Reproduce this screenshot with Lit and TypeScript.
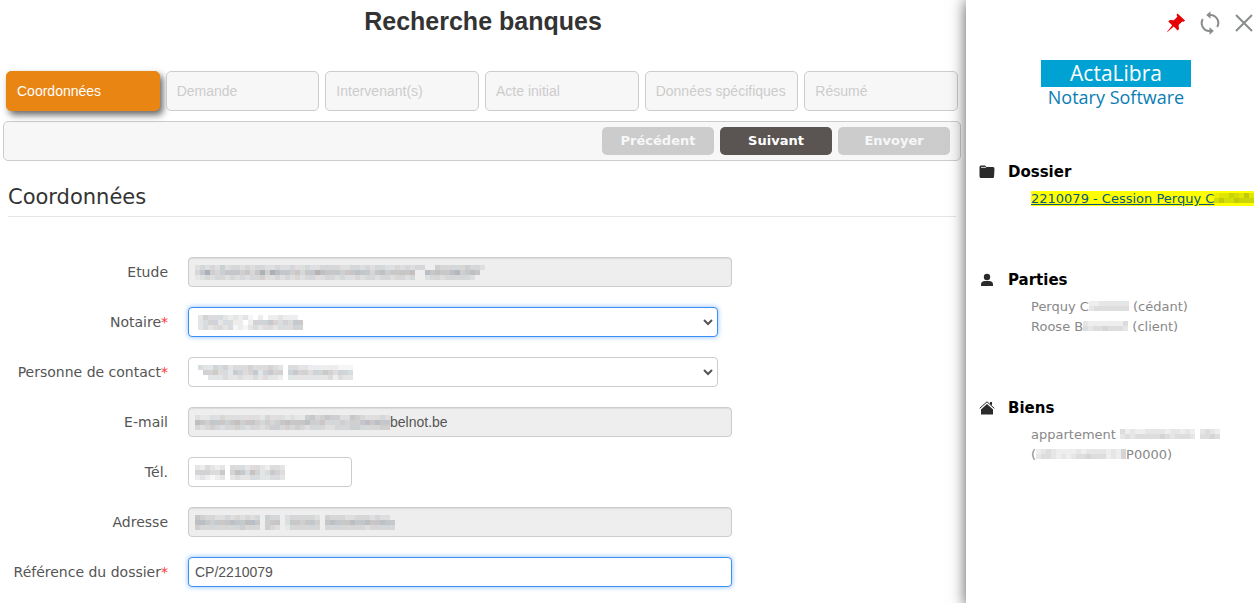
import { LitElement, html, svg, css } from "lit";
import { customElement, property } from "lit/decorators.js";

const TINTS = ["110,112,120", "95,115,135", "130,115,110", "115,115,115", "105,120,125"];

/* Masked personal data: each row is a string of grey levels, 0 (clear) to 9 (dark). */
@customElement("masked-text")
export class MaskedText extends LitElement {
  @property({ attribute: false }) rows: string[] = [];
  @property({ type: Number }) cell = 5;
  @property() tone = "";
  static styles = css`
    :host { display: inline-block; line-height: 0; }
    svg { display: block; }
  `;
  render() {
    const c = this.cell;
    const w = Math.max(...this.rows.map((r) => r.length)) * c;
    const h = this.rows.length * c;
    return html`<svg width=${w} height=${h} shape-rendering="crispEdges" aria-hidden="true">
      ${this.rows.map((row, y) =>
        [...row].map((d, x) => {
          const a = Number(d) / 16;
          const tone = this.tone || TINTS[(x * 3 + y * 2 + Number(d)) % TINTS.length];
          return svg`<rect x=${x * c} y=${y * c} width=${c} height=${c} fill=${`rgba(${tone},${a})`}></rect>`;
        })
      )}
    </svg>`;
  }
}

const STEPS = ["Coordonnées", "Demande", "Intervenant(s)", "Acte initial", "Données spécifiques", "Résumé"];

interface Field {
  id: string;
  label: string;
  kind: "input" | "select";
  mask?: string[];
  value?: string;
  required?: boolean;
  disabled?: boolean;
  active?: boolean;
  short?: boolean;
}

const FIELDS: Field[] = [
  { id: "etude", label: "Etude", kind: "input", disabled: true, mask: [
    "2323242332323322322322322333322332323322323233004333334332",
    "3584345554535848655453558655545565535645555600656556745650",
    "1232332323233422323232332233232232332332332300233233333200"] },
  { id: "notaire", label: "Notaire", kind: "select", required: true, active: true, mask: [
    "354443232310202232220", "345534422025556545466", "343443412134344344455"] },
  { id: "contact", label: "Personne de contact", kind: "select", required: true, mask: [
    "43354534445444543044332222221110", "05564436545635655056554556545540", "00333433433434332033333333424330"] },
  { id: "email", label: "E-mail", kind: "input", disabled: true, value: "belnot.be", mask: [
    "211223222222213222121145345442254322232", "654555456455434345655564453334344565655", "323432334323323443434323332233344333344"] },
  { id: "tel", label: "Tél.", kind: "input", short: true, mask: [
    "3243230444344324430", "5554460576475346540", "2321230343344334430"] },
  { id: "adresse", label: "Adresse", kind: "input", disabled: true, mask: [
    "5433223232323043302333332043332233323220", "6654555655665045502554554056555655655655", "4333333334333043201333333033333333233333"] },
  { id: "reference", label: "Référence du dossier", kind: "input", required: true, active: true, value: "CP/2210079" },
];

@customElement("app-root")
export class AppRoot extends LitElement {
  static styles = css`
    :host {
      display: grid;
      grid-template-columns: minmax(0, 1fr) 294px;
      min-height: 100vh;
      overflow: hidden;
      background: #fff;
      color: #555;
      font: 14px/20px Verdana, "DejaVu Sans", sans-serif;
    }
    * { box-sizing: border-box; }
    h1, h2, h3, ol, ul { margin: 0; padding: 0; list-style: none; }
    h1 {
      padding-top: 6px;
      text-align: center;
      font: bold 25px/30px "Liberation Sans", Arial, sans-serif;
      color: #333;
    }
    .steps {
      display: grid;
      grid-template-columns: repeat(6, minmax(0, 1fr));
      gap: 6px;
      padding: 35px 8px 10px 6px;
    }
    .step {
      width: 100%;
      height: 40px;
      padding: 0 10px;
      border: 1px solid #ccc;
      border-radius: 5px;
      background: #f7f7f7;
      color: #ccc;
      text-align: left;
      white-space: nowrap;
      font: 14px/20px "Liberation Sans", Arial, sans-serif;
    }
    .step.current {
      border-color: #e98513;
      background: #e98513;
      color: #fff;
      box-shadow: 3px 4px 7px rgba(0, 0, 0, 0.6);
    }
    .toolbar {
      display: flex;
      justify-content: flex-end;
      gap: 6px;
      margin: 0 5px 0 3px;
      padding: 5px 10px;
      border: 1px solid #ccc;
      border-radius: 5px;
      background: #f7f7f7;
    }
    .action {
      width: 112px;
      height: 28px;
      padding: 0;
      border: 0;
      border-radius: 5px;
      background: #5a5553;
      color: #fff;
      font: bold 13px/20px Verdana, "DejaVu Sans", sans-serif;
    }
    .action:disabled { background: #ccc; color: #f7f7f7; }
    h2 {
      margin: 21px 10px 40px 8px;
      padding-bottom: 4px;
      border-bottom: 1px solid #e5e5e5;
      font-size: 21px;
      line-height: 30px;
      font-weight: normal;
      color: #333;
    }
    .row {
      display: grid;
      grid-template-columns: 168px minmax(0, 544px);
      column-gap: 20px;
      align-items: center;
      margin-bottom: 20px;
    }
    .row label { text-align: right; white-space: nowrap; }
    .star { color: #f33; }
    .field {
      display: flex;
      align-items: center;
      height: 30px;
      padding-left: 6px;
      border: 1px solid #ccc;
      border-radius: 4px;
      background: #fff;
      position: relative;
    }
    .field.disabled { background: #eee; box-shadow: inset 0 1px 1px rgba(0, 0, 0, 0.08); }
    .field.short { width: 164px; }
    .field.pick { margin-right: 14px; padding-left: 0; }
    .field.active { border-color: #3b8ff5; box-shadow: 0 0 5px rgba(59, 143, 245, 0.6); }
    input, select {
      flex: 1;
      min-width: 0;
      height: 28px;
      margin: 0;
      padding: 0;
      border: 0;
      outline: 0;
      background: transparent;
      color: #555;
      font: 14px/20px "Liberation Sans", Arial, sans-serif;
    }
    .pick select { margin-right: 1px; }
    .pick masked-text { position: absolute; left: 9px; top: 7px; pointer-events: none; }
    aside {
      background: #fff;
      box-shadow: 0 0 15px rgba(0, 0, 0, 0.65);
      position: relative;
    }
    .tools { display: flex; justify-content: flex-end; gap: 12px; padding: 11px 5px 0 0; }
    .tool { display: block; padding: 0; border: 0; background: none; line-height: 0; }
    .logo {
      width: 150px;
      margin: 25px auto 0 75px;
      text-align: center;
      font-family: "Open Sans", "Noto Sans", sans-serif;
      color: #0a7db5;
    }
    .logo-name {
      display: block;
      background: #00a2d4;
      color: #fff;
      font-size: 21px;
      line-height: 27px;
    }
    .logo-sub { display: block; font-size: 18px; line-height: 20px; white-space: nowrap; }
    .group { padding-left: 13px; }
    .group.first { padding-top: 55px; }
    .group + .group { padding-top: 61px; }
    .group h3 {
      display: flex;
      align-items: center;
      gap: 13px;
      height: 20px;
      color: #000;
      font-size: 15px;
      line-height: 20px;
    }
    .group ul {
      padding: 7px 5px 0 52px;
      color: #888;
      font-size: 13px;
      line-height: 20px;
      white-space: nowrap;
    }
    .group li { overflow: hidden; height: 20px; }
    .group masked-text { vertical-align: baseline; }
    .group a { background: #ff0; color: #0b5a78; }
  `;

  private renderField(f: Field) {
    const cls = ["field", f.disabled ? "disabled" : "", f.active ? "active" : "", f.short ? "short" : "", f.kind === "select" ? "pick" : ""].join(" ");
    const mask = f.mask ? html`<masked-text .rows=${f.mask}></masked-text>` : "";
    return html`<div class="row">
      <label for=${f.id}>${f.label}${f.required ? html`<span class="star">*</span>` : ""}</label>
      <div class=${cls}>
        ${mask}
        ${f.kind === "select"
          ? html`<select id=${f.id}><option></option></select>`
          : html`<input id=${f.id} type="text" .value=${f.value ?? ""} ?readonly=${!!f.disabled} />`}
      </div>
    </div>`;
  }

  render() {
    return html`
      <main>
        <h1>Recherche banques</h1>
        <nav class="steps">
          ${STEPS.map((s, i) => html`<button class="step ${i === 0 ? "current" : ""}">${s}</button>`)}
        </nav>
        <div class="toolbar">
          <button class="action" disabled>Précédent</button>
          <button class="action">Suivant</button>
          <button class="action" disabled>Envoyer</button>
        </div>
        <h2>Coordonnées</h2>
        <form>${FIELDS.map((f) => this.renderField(f))}</form>
      </main>
      <aside>
        <div class="tools">
          <button class="tool" aria-label="Épingler">
            <svg width="22" height="24" viewBox="0 0 22 24"><path fill="#e60000" d="M12.5 2.5L20 9.5L18.8 10.8L17.2 10.4L13.6 14L14 18L12.6 19.4L8.7 15.6L2.2 21.2L2 21L7.2 14.2L3.3 10.4L4.8 9L8.8 9.3L12.3 5.8L11.6 3.8Z"/></svg>
          </button>
          <button class="tool" aria-label="Actualiser">
            <svg width="22" height="24" viewBox="0 0 22 24" fill="none" stroke="#888c8c" stroke-width="2"><path d="M10 4H11.5A8 8 0 0 1 18.2 16M12 20H10.5A8 8 0 0 1 3.8 8"/><path fill="#888c8c" stroke="none" d="M11.5 .3L7.2 4L11.5 7.7ZM10.5 16.3L14.8 20L10.5 23.7Z"/></svg>
          </button>
          <button class="tool" aria-label="Fermer">
            <svg width="22" height="24" viewBox="0 0 22 24" fill="none" stroke="#888c8c" stroke-width="2"><path d="M3 4L19 20M19 4L3 20"/></svg>
          </button>
        </div>
        <div class="logo"><span class="logo-name">ActaLibra</span><span class="logo-sub">Notary Software</span></div>
        <section class="group first">
          <h3><svg width="16" height="16" viewBox="0 0 16 16" fill="#2b2b2b"><path d="M.5 12V3Q.5 1.5 2 1.5H6L7.5 3H14Q15.5 3 15.5 5L15 13Q15 14 14 14H2Q.8 14 .7 13Z"/><path d="M2 3.4H7" stroke="#fff" stroke-width=".8"/></svg>Dossier</h3>
          <ul><li><a href="#">2210079 - Cession Perquy C<masked-text tone="90,120,20" .rows=${["23354363", "46446555"]}></masked-text></a></li></ul>
        </section>
        <section class="group">
          <h3><svg width="16" height="16" viewBox="0 0 16 16" fill="#2b2b2b"><circle cx="8" cy="5" r="3.2"/><path d="M2 14V12.5Q2 9 6 9H10Q14 9 14 12.5V14Z"/></svg>Parties</h3>
          <ul>
            <li>Perquy C<masked-text tone="120,120,120" .rows=${["22333333", "34444444"]}></masked-text> (cédant)</li>
            <li>Roose B<masked-text tone="120,120,120" .rows=${["322222224", "434454443"]}></masked-text> (client)</li>
          </ul>
        </section>
        <section class="group">
          <h3><svg width="16" height="16" viewBox="0 0 16 16" fill="#2b2b2b"><path d="M2 9.5L8 4L14 9.5V14.5H2ZM11 2H13V5.5L11 4Z"/><path d="M.7 8.3L8 1.8L15.3 8.3" fill="none" stroke="#2b2b2b" stroke-width="1"/></svg>Biens</h3>
          <ul>
            <li>appartement <masked-text tone="120,120,120" .rows=${["42322333323323203432", "34344444543444304454"]}></masked-text></li>
            <li>(<masked-text tone="120,120,120" .rows=${["234322223233332325", "344323234454442325"]}></masked-text>P0000)</li>
          </ul>
        </section>
      </aside>
    `;
  }
}
